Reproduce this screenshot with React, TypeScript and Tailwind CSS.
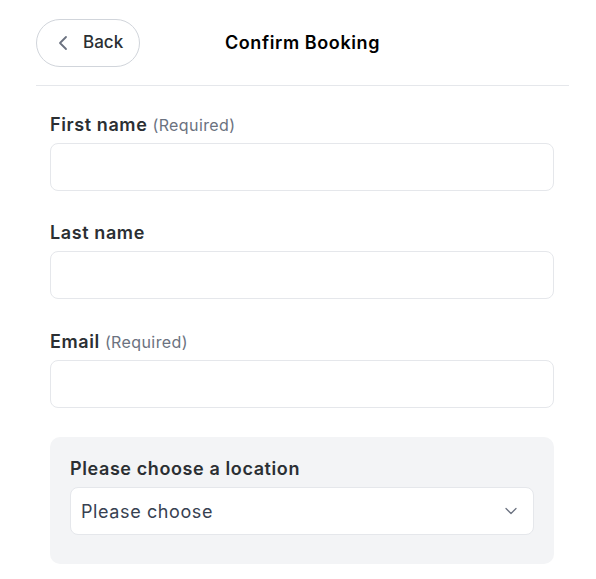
import { ChevronLeft, ChevronDown } from 'lucide-react'

function Field({ label, required, className = '' }: { label: string; required?: boolean; className?: string }) {
  return (
    <div className={`flex flex-col gap-[5px] ${className}`}>
      <label className="text-[18px] leading-[26px] font-semibold tracking-[0.6px] text-[#2b2f33]">
        {label}
        {required && (
          <span className="ml-[5px] text-[16px] font-normal tracking-[0.4px] text-[#6b7280]">(Required)</span>
        )}
      </label>
      <input className="h-12 w-full rounded-lg border border-[#e5e7eb] bg-white px-3 outline-none" />
    </div>
  )
}

export default function App() {
  return (
    <div className="min-h-screen bg-white" style={{ fontFamily: 'Inter, "Noto Sans", sans-serif' }}>
      <div className="ml-9 mr-[27px]">
        <header className="relative flex items-center h-[86px] border-b border-[#e5e7eb]">
          <button className="flex items-center gap-[8px] h-12 w-[104px] pl-[14px] rounded-full border border-[#d1d5db] bg-white text-[17px] font-medium text-[#2b2f33]">
            <ChevronLeft size={24} strokeWidth={1.8} className="text-[#6b7280]" />
            Back
          </button>
          <h1 className="absolute left-1/2 -translate-x-1/2 text-[18px] font-semibold tracking-[0.6px] text-black">
            Confirm Booking
          </h1>
        </header>

        <form className="flex flex-col gap-[29px] pt-[26px] pl-[14px] pr-[15px]">
          <Field label="First name" required />
          <Field label="Last name" />
          <Field label="Email" required className="mt-[1px]" />

          <div className="flex flex-col gap-[5px] rounded-[10px] bg-[#f3f4f6] px-5 pt-[19px] pb-[29px]">
            <label className="text-[18px] leading-[26px] font-semibold tracking-[0.6px] text-[#2b2f33]">
              Please choose a location
            </label>
            <div className="flex items-center justify-between h-12 rounded-lg border border-[#e5e7eb] bg-white pl-[10px] pr-[12px]">
              <span className="text-[18px] tracking-[0.6px] text-[#374151]">Please choose</span>
              <ChevronDown size={20} strokeWidth={1.5} className="text-[#6b7280]" />
            </div>
          </div>
        </form>
      </div>
    </div>
  )
}
